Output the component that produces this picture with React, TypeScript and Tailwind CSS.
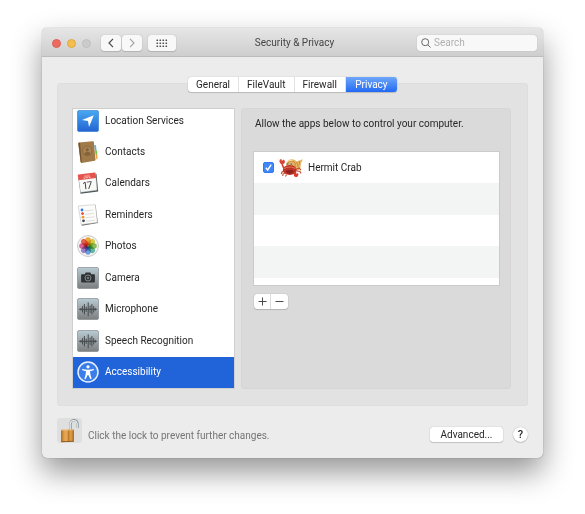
import { useState } from "react";
import type { ReactNode } from "react";

function LocationIcon() {
  return (
    <svg viewBox="0 0 22 22" className="size-[22px]" aria-hidden="true">
      <defs>
        <linearGradient id="loc" x1="0" y1="0" x2="0" y2="1">
          <stop offset="0" stopColor="#47a9f1" />
          <stop offset="1" stopColor="#2463d3" />
        </linearGradient>
      </defs>
      <rect x="0.5" y="0.5" width="21" height="21" rx="1.5" fill="url(#loc)" stroke="#2f77cf" strokeWidth="0.6" />
      <path d="M16.8 5.2 12 17l-1-6-6-.9z" fill="#fff" />
    </svg>
  );
}

function ContactsIcon() {
  return (
    <svg viewBox="0 0 22 22" className="size-[22px]" aria-hidden="true">
      <path d="M17 4l2 .3.5 5-2 .3z" fill="#4bb5e8" />
      <path d="M17.5 9.500l2.300-.3.5 4.500-2.300.4z" fill="#73bd45" />
      <path d="M18 14l2.300-.4.3 4.400-2.300.6z" fill="#f0a13a" />
      <path d="M1.500 2.500 16.500.5l3 18.500-15.500 3z" fill="#f4f1ea" />
      <path d="M1.300 2.200Q1.200 1.500 2 1.400L15.800.3q1 0 1.100.9l1.600 17.500q0 .9-.8 1L4.600 21.900q-.8.1-1-.8z" fill="#a07a48" />
      <path d="M1.300 2.200 3.600 21l1.200.8L3 1.500z" fill="#755530" />
      <circle cx="10.300" cy="10" r="4.700" fill="#a98454" stroke="#84633a" strokeWidth="0.7" />
      <circle cx="10.200" cy="8.700" r="1.700" fill="#84633a" />
      <path d="M7.200 13.200q.4-2.400 3.100-2.500 2.700 0 3.300 2-1.300 1.800-3.200 1.900-2 0-3.200-1.400z" fill="#84633a" />
    </svg>
  );
}

function CalendarIcon() {
  return (
    <svg viewBox="0 0 22 22" className="size-[22px]" aria-hidden="true">
      <path d="M1.200 4.500 3.600 21.800 21.200 19.500 19.500 2z" fill="#4d5659" />
      <path d="M1.200 3.700 3.400 19.500q.1.800.9.700l15-2q.8-.1.700-.9L18.600 2z" fill="#f8f8f7" stroke="#b5b8b8" strokeWidth="0.4" />
      <path d="M.8 3.500Q.7 2.700 1.500 2.600L17.700.6q.8-.1.900.7l.6 4.800L1.500 8.200z" fill="#e5554e" />
      <text x="10.300" y="6" textAnchor="middle" fontSize="4" fill="#fff" fontFamily="Inter, sans-serif" transform="rotate(-7 10.300 6)">JUL</text>
      <text x="11" y="17" textAnchor="middle" fontSize="10" fill="#333" fontFamily="Inter, sans-serif" transform="rotate(-7 11 17)">17</text>
    </svg>
  );
}

function RemindersIcon() {
  const dots = ["#2c7cf2", "#ec4739", "#f29a36", "#434851"];
  return (
    <svg viewBox="0 0 22 22" className="size-[22px]" aria-hidden="true">
      <path d="M2 3 4.800 21.700 20.800 19 18.500 1z" fill="#676765" />
      <path d="M1.200 2 17.800.6q.5 0 .6.500l1.900 16.600q0 .6-.5.700L4.900 20.600q-.6 0-.7-.5z" fill="#fcfcfb" stroke="#b9b9b7" strokeWidth="0.5" />
      {dots.map((color, i) => (
        <g key={color}>
          <circle cx={5 + i * 0.500} cy={6 + i * 3.600} r="1.400" fill={color} />
          <path d={`M${7.500 + i * 0.500} ${7 + i * 3.400}l9-1`} stroke="#c9c9c9" strokeWidth="0.600" />
        </g>
      ))}
    </svg>
  );
}

function PhotosIcon() {
  const petals = ["#f5a01a", "#d3cf2c", "#7dbb3a", "#4cb393", "#5795df", "#9070c4", "#d84f88", "#ec4c32"];
  return (
    <svg viewBox="0 0 22 22" className="size-[22px]" aria-hidden="true">
      <circle cx="11" cy="11" r="10.500" fill="#f4f4f4" stroke="#b5b5b5" strokeWidth="0.700" />
      {petals.map((color, i) => (
        <rect
          key={color}
          x="8.300"
          y="2.200"
          width="5.400"
          height="8.500"
          rx="2.700"
          fill={color}
          fillOpacity="0.850"
          transform={`rotate(${i * 45} 11 11)`}
          style={{ mixBlendMode: "multiply" }}
        />
      ))}
    </svg>
  );
}

function GrayTile({ id, children }: { id: string; children: ReactNode }) {
  return (
    <svg viewBox="0 0 22 22" className="size-[22px]" aria-hidden="true">
      <defs>
        <linearGradient id={id} x1="0" y1="0" x2="0" y2="1">
          <stop offset="0" stopColor="#b9cbd3" />
          <stop offset="1" stopColor="#7c7e7f" />
        </linearGradient>
      </defs>
      <rect x="0.500" y="0.500" width="21" height="21" rx="1.500" fill={`url(#${id})`} stroke="#858b8e" strokeWidth="0.700" />
      {children}
    </svg>
  );
}

function CameraIcon() {
  return (
    <GrayTile id="camera">
      <path d="M4.800 7.200h3l.9-1.600h4.600l.9 1.600h3q.7 0 .7.700v6.900q0 .7-.7.700H4.800q-.7 0-.7-.7V7.900q0-.7.700-.7z" fill="#303335" />
      <circle cx="11" cy="11" r="3" fill="#303335" stroke="#929a9d" strokeWidth="0.800" />
      <circle cx="11" cy="11" r="1.300" fill="#6f777a" />
    </GrayTile>
  );
}

function WaveIcon({ id }: { id: string }) {
  return (
    <GrayTile id={id}>
      <path
        d="M2.500 11.300h17M4 10.300v2M5.600 8.500v5.600M7.400 6.500v9.600M9.200 9v4.600M11.200 4.800v13M13.100 8v6.600M14.900 6.500v9.600M16.700 8.500v5.600M18.300 10.300v2"
        stroke="#44494b"
        strokeWidth="1"
        strokeLinecap="round"
      />
    </GrayTile>
  );
}

function AccessibilityIcon() {
  return (
    <svg viewBox="0 0 22 22" className="size-[22px]" aria-hidden="true">
      <circle cx="11" cy="11" r="10" fill="#3c7ee9" stroke="#e9f1ff" strokeWidth="1.500" />
      <circle cx="11" cy="5.800" r="1.600" fill="#fff" />
      <path
        d="M5.300 8q2.600.8 5.700.8T16.700 8l.3 1.100q-2 .8-3.900 1l.2 3 1.300 4.700-1.100.4L11.300 14h-.6l-2.200 4.200-1.100-.4 1.300-4.700.2-3q-1.900-.2-3.900-1z"
        fill="#fff"
      />
    </svg>
  );
}

function CrabIcon() {
  return (
    <svg viewBox="0 0 24 20" className="h-5 w-6 shrink-0" aria-hidden="true">
      <path d="M7 7Q8 1 13.500 1.200q3 .2 4 2.300l6.200-2.300q-.7 3-2.200 4.800 1 4-2.500 6.500L9 13z" fill="#e8b662" />
      <path d="M9 5q3-3.500 6-1.500 2 2 1 5M17 4q2.500 1.500 2 5M20 3l1 4" fill="none" stroke="#bf7d36" strokeWidth="0.800" />
      <path d="M9.500 3q2-1.500 4-.6" stroke="#f8df9d" strokeWidth="1.200" fill="none" />
      <path d="M.4 3q.2-2 1.900-1.900L3 3l1.300-1.600q1.800.5 1.700 2.500Q5.500 6.300 3.300 6.300.6 6 .4 3z" fill="#da4535" />
      <path d="M3 6l1.500 3.500L7 10" fill="none" stroke="#ce3e2f" strokeWidth="1.500" />
      <path d="M18 11l2-1 2 2M18 13l3 .5 1 2M5 13l-2 1-.7 2M6 15l-2 1-.2 2M7.500 16.500l-1 2" fill="none" stroke="#c94b32" strokeWidth="1.100" />
      <ellipse cx="10.800" cy="12" rx="7" ry="5" fill="#bd3428" />
      <path d="M5 10.500q6-3 11.500 0" fill="none" stroke="#e87353" strokeWidth="1.200" />
      <path d="M6.500 13q4.500-2 8.500 0-1.500 3-4.300 3T6.500 13z" fill="#8f211e" />
      <path d="M8.500 8V5.500M12.300 8V5.500" stroke="#cb7351" strokeWidth="1" />
      <circle cx="8.500" cy="6" r="1" fill="#6d8790" />
      <circle cx="12.300" cy="6" r="1" fill="#6d8790" />
      <path d="M15 15q1-1.500 2.300-.5l.2 1.500 1.500-1q1 1.700-.3 3.500-2.200 1.200-3.500-.2-.9-1.500-.2-3.300z" fill="#d93d30" />
    </svg>
  );
}

function LockIcon() {
  return (
    <svg viewBox="0 0 25 25" className="size-[25px]" aria-hidden="true">
      <defs>
        <linearGradient id="brass" x1="0" y1="0" x2="1" y2="0">
          <stop offset="0" stopColor="#ad6b20" />
          <stop offset="0.250" stopColor="#e3a04b" />
          <stop offset="0.480" stopColor="#e8aa59" />
          <stop offset="0.540" stopColor="#b97425" />
          <stop offset="0.750" stopColor="#dda04c" />
          <stop offset="1" stopColor="#aa6b24" />
        </linearGradient>
      </defs>
      <path d="M13.500 12V6.500q0-4 3.500-4.200 3.500.2 3.500 4.200V10" fill="none" stroke="#87939a" strokeWidth="2.400" />
      <path d="M13.200 12V6.500q0-3.700 3.700-3.900 3.200.2 3.300 3.900V10" fill="none" stroke="#e5ebee" strokeWidth="1.300" />
      <path d="M4 12.500q0-.7.700-.7l11.600-.4q.7 0 .7.700v11q0 .6-.7.700l-11.600.4q-.7 0-.7-.7z" fill="url(#brass)" />
      <path d="M4.300 12.200l12.400-.4" stroke="#f0c488" strokeWidth="0.800" />
      <path d="M4.300 23.700l12.400-.4" stroke="#82501d" strokeWidth="0.800" />
    </svg>
  );
}

const services: { name: string; icon: ReactNode }[] = [
  { name: "Location Services", icon: <LocationIcon /> },
  { name: "Contacts", icon: <ContactsIcon /> },
  { name: "Calendars", icon: <CalendarIcon /> },
  { name: "Reminders", icon: <RemindersIcon /> },
  { name: "Photos", icon: <PhotosIcon /> },
  { name: "Camera", icon: <CameraIcon /> },
  { name: "Microphone", icon: <WaveIcon id="microphone" /> },
  { name: "Speech Recognition", icon: <WaveIcon id="speech" /> },
  { name: "Accessibility", icon: <AccessibilityIcon /> },
];

const tabs = ["General", "FileVault", "Firewall", "Privacy"];

const raised = "bg-white shadow-[0_0_1px_rgba(0,0,0,0.35),0_1px_1px_rgba(0,0,0,0.15)]";
const toolButton =
  "flex h-4 items-center justify-center rounded-[3px] bg-[#f8f8f8] shadow-[0_0_1px_rgba(0,0,0,0.3),0_1px_1px_rgba(0,0,0,0.12)]";

function TitleBar() {
  return (
    <header className="grid h-[29px] grid-cols-[1fr_auto_1fr] items-center border-b border-[#bcbcbc] bg-linear-to-b from-[#e6e6e6] to-[#cecece] pt-0.5 pr-1.5 pl-2.5">
      <div className="flex items-center">
        <div className="flex gap-1.5">
          <button aria-label="Close" className="size-[9px] rounded-full border border-[#dd6058] bg-[#ee6a5f]" />
          <button aria-label="Minimize" className="size-[9px] rounded-full border border-[#dfaa43] bg-[#f5bf4f]" />
          <button aria-label="Zoom" disabled className="size-[9px] rounded-full border border-[#bfbfbf] bg-[#cbcbcb]" />
        </div>
        <div className="ml-2.5 flex gap-px">
          <button aria-label="Back" className={`${toolButton} w-5`}>
            <svg viewBox="0 0 8 10" className="h-2.5 w-2" fill="none" stroke="#4c4c4c" strokeWidth="1.200">
              <path d="M6 .8 2 5l4 4.200" />
            </svg>
          </button>
          <button aria-label="Forward" className={`${toolButton} w-5`}>
            <svg viewBox="0 0 8 10" className="h-2.5 w-2" fill="none" stroke="#a5a5a5" strokeWidth="1.200">
              <path d="M2 .8 6 5 2 9.200" />
            </svg>
          </button>
        </div>
        <button aria-label="Show All" className={`${toolButton} ml-1.5 w-7`}>
          <svg viewBox="0 0 12 9" className="h-[9px] w-3" fill="#505050">
            {[0, 1, 2].map((row) =>
              [0, 1, 2, 3].map((col) => (
                <rect key={`${row}-${col}`} x={0.500 + col * 3} y={0.500 + row * 3} width="1.600" height="1.600" rx="0.300" />
              )),
            )}
          </svg>
        </button>
      </div>
      <h1 className="text-[#454545]">Security &amp; Privacy</h1>
      <label className="flex h-4 w-[120px] items-center gap-[3px] justify-self-end rounded-[3px] bg-[#f8f8f8] pl-1 shadow-[0_0_1px_rgba(0,0,0,0.3)]">
        <svg viewBox="0 0 10 10" className="size-2.5 shrink-0" fill="none" stroke="#666" strokeWidth="1">
          <circle cx="4.200" cy="4.200" r="3.500" />
          <path d="m6.800 6.800 2.700 2.700" />
        </svg>
        <input
          type="search"
          aria-label="Search"
          placeholder="Search"
          className="min-w-0 flex-1 bg-transparent outline-none placeholder:text-[#b0b0b0]"
        />
      </label>
    </header>
  );
}

export default function App() {
  const [tab, setTab] = useState("Privacy");
  const [service, setService] = useState("Accessibility");
  const [allowed, setAllowed] = useState(true);

  return (
    <div className="min-h-screen bg-white px-[42px] pt-7 pb-14 font-['Roboto',sans-serif] text-[10px] leading-4 text-[#262626]">
      <div className="overflow-hidden rounded-[5px] bg-[#ececec] shadow-[0_0_1px_rgba(0,0,0,0.5),0_14px_30px_rgba(0,0,0,0.42)]">
        <TitleBar />
        <main className="flex flex-col px-[15px] pt-5 pb-[15px]">
          <div role="tablist" className={`z-10 flex h-[15px] self-center overflow-hidden rounded-[3px] ${raised}`}>
            {tabs.map((name) => (
              <button
                key={name}
                role="tab"
                aria-selected={name === tab}
                onClick={() => setTab(name)}
                className={
                  name === tab
                    ? "min-w-[51px] bg-linear-to-b from-[#6ea6f9] to-[#2169f3] px-2 leading-[15px] text-white"
                    : "min-w-[51px] border-r border-[#e2e2e2] px-2 leading-[15px]"
                }
              >
                {name}
              </button>
            ))}
          </div>

          <div className="-mt-[9px] flex gap-1.5 rounded-[3px] border border-[#dedede] bg-[#e2e2e2] pt-6 pr-4 pb-4 pl-3.5">
            <ul className="flex h-[281px] w-[163px] shrink-0 flex-col border border-[#cfcfcf] bg-white">
              {services.map(({ name, icon }) => (
                <li key={name} className="flex-1 first:h-[27px] first:flex-none first:pb-1">
                  <button
                    onClick={() => setService(name)}
                    aria-current={name === service}
                    className={
                      name === service
                        ? "flex size-full items-center gap-1.5 bg-[#2163d9] pl-1 text-white"
                        : "flex size-full items-center gap-1.5 pl-1"
                    }
                  >
                    {icon}
                    {name}
                  </button>
                </li>
              ))}
            </ul>

            <section className="flex-1 rounded-[3px] border border-[#d6d6d6] bg-[#dadada] pt-[7px] pr-2.5 pl-[11px]">
              <p className="pl-0.5">Allow the apps below to control your computer.</p>
              <ul className="mt-[19px] flex h-[135px] flex-col border border-[#cbcbcb] bg-white">
                <li className="flex h-[31px] items-center">
                  <label className="flex items-center pl-[9px]">
                    <span className="grid place-items-center">
                      <input
                        type="checkbox"
                        checked={allowed}
                        onChange={() => setAllowed(!allowed)}
                        className="col-start-1 row-start-1 size-[11px] appearance-none rounded-[2px] border border-[#bbb] bg-white checked:border-[#3578ee] checked:bg-[#3f86f7]"
                      />
                      {allowed && (
                        <svg viewBox="0 0 11 11" className="pointer-events-none col-start-1 row-start-1 size-[11px]" fill="none" stroke="#fff" strokeWidth="1.400">
                          <path d="M2.800 5.800 4.700 8l3.500-5.400" />
                        </svg>
                      )}
                    </span>
                    <span className="mx-[5px]">
                      <CrabIcon />
                    </span>
                    Hermit Crab
                  </label>
                </li>
                <li className="h-8 bg-[#f3f5f5]" />
                <li className="h-[31px]" />
                <li className="h-8 bg-[#f3f5f5]" />
              </ul>
              <div className={`mt-2 ml-px inline-flex h-[15px] rounded-[3px] ${raised}`}>
                <button aria-label="Add" className="grid w-[17px] place-items-center border-r border-[#dcdcdc]">
                  <svg viewBox="0 0 9 9" className="size-[9px]" stroke="#4a4a4a" strokeWidth="1">
                    <path d="M4.500.5v8M.5 4.500h8" />
                  </svg>
                </button>
                <button aria-label="Remove" className="grid w-[17px] place-items-center">
                  <svg viewBox="0 0 9 9" className="size-[9px]" stroke="#4a4a4a" strokeWidth="1">
                    <path d="M.5 4.500h8" />
                  </svg>
                </button>
              </div>
            </section>
          </div>

          <footer className="mt-3 flex items-end">
            <button aria-label="Lock" className="rounded-[3px] bg-[#dfdfdf]">
              <LockIcon />
            </button>
            <p className="ml-1.5 flex-1 leading-[14px] text-[#757575]">Click the lock to prevent further changes.</p>
            <button className={`mb-px h-[15px] w-[73px] rounded-[3px] leading-[15px] ${raised}`}>Advanced...</button>
            <button aria-label="Help" className={`mb-px ml-2.5 size-[15px] rounded-full text-[11px] leading-[15px] font-medium ${raised}`}>
              ?
            </button>
          </footer>
        </main>
      </div>
    </div>
  );
}
